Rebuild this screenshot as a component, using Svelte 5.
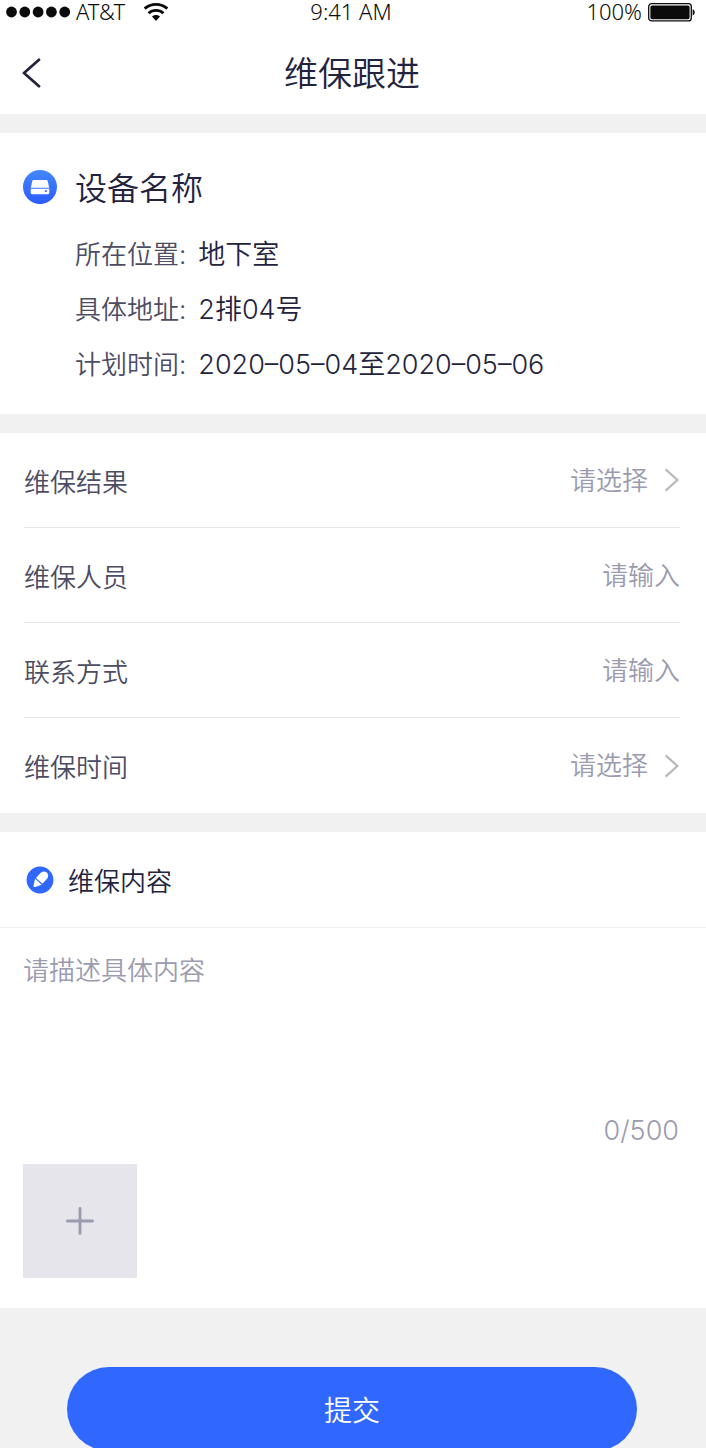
<script lang="ts">
  type Field = {
    key: string;
    label: string;
    kind: 'select' | 'text' | 'tel';
    options?: string[];
  };

  const device = {
    name: '设备名称',
    info: [
      { label: '所在位置', value: '地下室' },
      { label: '具体地址', value: '2排04号' },
      { label: '计划时间', value: '2020–05–04至2020–05–06' }
    ]
  };

  const FIELDS: Field[] = [
    { key: 'result', label: '维保结果', kind: 'select', options: ['正常', '异常'] },
    { key: 'staff', label: '维保人员', kind: 'text' },
    { key: 'contact', label: '联系方式', kind: 'tel' },
    { key: 'time', label: '维保时间', kind: 'select', options: ['2020–05–04', '2020–05–05', '2020–05–06'] }
  ];

  const MAX_LEN = 500;

  let form = $state<Record<string, string>>({ result: '', staff: '', contact: '', time: '' });
  let content = $state('');
</script>

<div class="page">
  <div class="status">
    <div class="carrier">
      <svg width="64" height="12" viewBox="0 0 64 12" fill="#0b0b0b" aria-hidden="true">
        {#each [0, 1, 2, 3, 4] as i (i)}
          <circle cx={5.5 + i * 13.3} cy="6" r="5.4" />
        {/each}
      </svg>
      <span class="name">AT&amp;T</span>
      <svg width="26" height="20" viewBox="0 0 26 20" fill="none" stroke="#0b0b0b" aria-hidden="true">
        <path d="M1.7 6.6C8 .9 18 .9 24.3 6.6" stroke-width="2.8" />
        <path d="M5.6 11.2c4.2-3.8 10.6-3.8 14.8 0" stroke-width="2.8" />
        <path d="M9 14.6c2.3-2 5.7-2 8 0L13 19z" fill="#0b0b0b" stroke="none" />
      </svg>
    </div>
    <span>9:41 AM</span>
    <div class="power">
      <span>100%</span>
      <svg width="48" height="20" viewBox="0 0 48 20" aria-hidden="true">
        <rect x=".7" y="1.7" width="42.6" height="17.2" rx="3" fill="none" stroke="#0b0b0b" stroke-width="1.3" />
        <rect x="2.4" y="3.4" width="39.2" height="13.8" rx="1.6" fill="#0b0b0b" />
        <path d="M44.6 7.2c2.8.6 2.8 5.6 0 6.2z" fill="#0b0b0b" />
      </svg>
    </div>
  </div>

  <header class="nav">
    <button class="back" type="button" aria-label="返回">
      <svg width="20" height="30" viewBox="0 0 20 30" fill="none" stroke="#23233f" stroke-width="2.8" stroke-linecap="round" stroke-linejoin="round">
        <path d="M17 1.8 2 15l15 13.2" />
      </svg>
    </button>
    <h1>维保跟进</h1>
  </header>

  <main>
    <section class="device">
      <svg width="34" height="34" viewBox="0 0 34 34" aria-hidden="true">
        <defs>
          <linearGradient id="disk" x1="0" y1="0" x2="0" y2="1">
            <stop offset="0" stop-color="#4388fc" />
            <stop offset="1" stop-color="#2b5cfb" />
          </linearGradient>
        </defs>
        <circle cx="17" cy="17" r="17" fill="url(#disk)" />
        <path d="M11 10h12c1 0 1.6.5 1.8 1.4l1.4 6.4H7.8l1.4-6.4c.2-.9.8-1.4 1.8-1.4z" fill="#fff" />
        <path d="M7.7 18.8h18.6v4c0 .9-.5 1.4-1.4 1.4H9.1c-.9 0-1.4-.5-1.4-1.4z" fill="#fff" />
        <circle cx="22.8" cy="21.1" r="1.1" fill="#2f66fb" />
      </svg>
      <h2>{device.name}</h2>
      <dl>
        {#each device.info as row (row.label)}
          <div>
            <dt>{row.label}:</dt>
            <dd>{row.value}</dd>
          </div>
        {/each}
      </dl>
    </section>

    <section class="fields">
      {#each FIELDS as f (f.key)}
        <div class="field">
          <label for={f.key}>{f.label}</label>
          {#if f.kind === 'select'}
            <select id={f.key} class:empty={!form[f.key]} bind:value={form[f.key]}>
              <option value="">请选择</option>
              {#each f.options ?? [] as o (o)}
                <option value={o}>{o}</option>
              {/each}
            </select>
            <svg width="16" height="24" viewBox="0 0 16 24" fill="none" stroke="#b9b9bd" stroke-width="2.2" aria-hidden="true">
              <path d="M1.6 1.4 13.4 12 1.6 22.6" />
            </svg>
          {:else}
            <input id={f.key} type={f.kind} placeholder="请输入" bind:value={form[f.key]} />
          {/if}
        </div>
      {/each}
    </section>

    <section class="content">
      <div class="content-head">
        <svg width="28" height="28" viewBox="0 0 28 28" aria-hidden="true">
          <circle cx="14" cy="14" r="13.4" fill="#3068ff" />
          <g transform="rotate(42 14 14)" fill="#fff">
            <path d="M9.6 8.4a4.4 4.4 0 0 1 8.8 0v6.8H9.6z" />
            <path d="M9.6 16.4h8.8l-3.2 6c-.5.9-1.9.9-2.4 0z" />
          </g>
        </svg>
        <h2><label for="content">维保内容</label></h2>
      </div>
      <div class="content-body">
        <textarea id="content" placeholder="请描述具体内容" maxlength={MAX_LEN} bind:value={content}></textarea>
        <p class="count">{content.length}/{MAX_LEN}</p>
        <button class="add" type="button" aria-label="添加图片">
          <svg width="28" height="28" viewBox="0 0 28 28" stroke="#9b9bb0" stroke-width="2.8" stroke-linecap="round">
            <path d="M14 1.4v25.2M1.4 14h25.2" />
          </svg>
        </button>
      </div>
    </section>
  </main>

  <footer>
    <button class="submit" type="button">提交</button>
  </footer>
</div>

<style>
  :global(html) {
    scrollbar-width: none;
  }
  :global(body) {
    background: #f1f1f1;
  }
  .page {
    font-family: Inter, 'Noto Sans CJK SC', sans-serif;
    font-size: 26px;
    font-weight: 350;
    color: #23233f;
  }
  h1,
  h2,
  dl,
  dd,
  p {
    margin: 0;
    font-weight: inherit;
  }
  button,
  input,
  select,
  textarea {
    padding: 0;
    border: 0;
    border-radius: 0;
    background: none;
    font: inherit;
    color: inherit;
  }
  svg {
    display: block;
    flex: none;
  }

  .status {
    display: grid;
    grid-template-columns: 1fr auto 1fr;
    align-items: start;
    height: 24px;
    padding: 0 10px 0 6px;
    background: #fff;
    font-family: 'Noto Sans', sans-serif;
    font-size: 22px;
    line-height: 22px;
    color: #0b0b0b;
  }
  .carrier,
  .power {
    display: flex;
    align-items: center;
    gap: 6px;
  }
  .carrier svg,
  .power svg {
    margin-top: 2px;
  }
  .power {
    justify-content: flex-end;
  }
  .name {
    margin-right: 12px;
  }

  .nav {
    display: grid;
    grid-template-columns: 60px 1fr 62px;
    align-items: center;
    height: 82px;
    padding-top: 8px;
    background: #fff;
  }
  .back {
    display: flex;
    align-items: center;
    height: 60px;
    padding-left: 22px;
  }
  h1 {
    padding-top: 2px;
    font-size: 34px;
    line-height: 48px;
    text-align: center;
  }

  main {
    display: grid;
    gap: 19px;
    padding-top: 19px;
  }
  section {
    background: #fff;
  }

  .device {
    display: grid;
    grid-template-columns: 34px 1fr;
    align-items: center;
    gap: 16px 18px;
    padding: 30px 23px 22px;
  }
  .device h2 {
    padding-top: 4px;
    font-size: 32px;
    line-height: 44px;
  }
  dl {
    grid-column: 2;
  }
  dl div {
    display: flex;
    gap: 12px;
    line-height: 55px;
  }
  dt {
    color: #4c4c62;
  }
  dd {
    font-size: 27px;
  }

  .fields {
    padding: 0 26px 0 24px;
  }
  .field {
    display: flex;
    align-items: center;
    height: 94px;
    border-bottom: 1px solid #e6e6e8;
  }
  .field:last-child {
    border-bottom: 0;
    height: 95px;
  }
  .field label {
    color: #4c4c62;
  }
  .field input,
  .field select {
    flex: 1;
    min-width: 0;
    height: 60px;
    text-align: right;
    text-align-last: right;
    outline: none;
  }
  .field select {
    appearance: none;
    margin-right: 16px;
  }
  .field select.empty,
  ::placeholder {
    color: #9b9bb0;
    opacity: 1;
  }

  .content-head {
    display: flex;
    align-items: center;
    gap: 14px;
    height: 95px;
    padding: 0 26px;
    border-bottom: 1px solid #f1f1f1;
  }
  .content-head h2 {
    font-size: 26px;
  }
  .content-body {
    padding: 23px 23px 30px;
  }
  textarea {
    display: block;
    width: 100%;
    height: 160px;
    line-height: 40px;
    resize: none;
    outline: none;
  }
  .count {
    padding-right: 4px;
    font-size: 27px;
    line-height: 40px;
    text-align: right;
    color: #9b9bb0;
  }
  .add {
    display: flex;
    align-items: center;
    justify-content: center;
    width: 114px;
    height: 114px;
    margin-top: 13px;
    background: #e5e5eb;
  }

  footer {
    padding: 59px 69px 0 67px;
  }
  .submit {
    display: block;
    width: 100%;
    height: 84px;
    border-radius: 42px;
    background: #3068ff;
    font-size: 28px;
    color: #fff;
  }
</style>
